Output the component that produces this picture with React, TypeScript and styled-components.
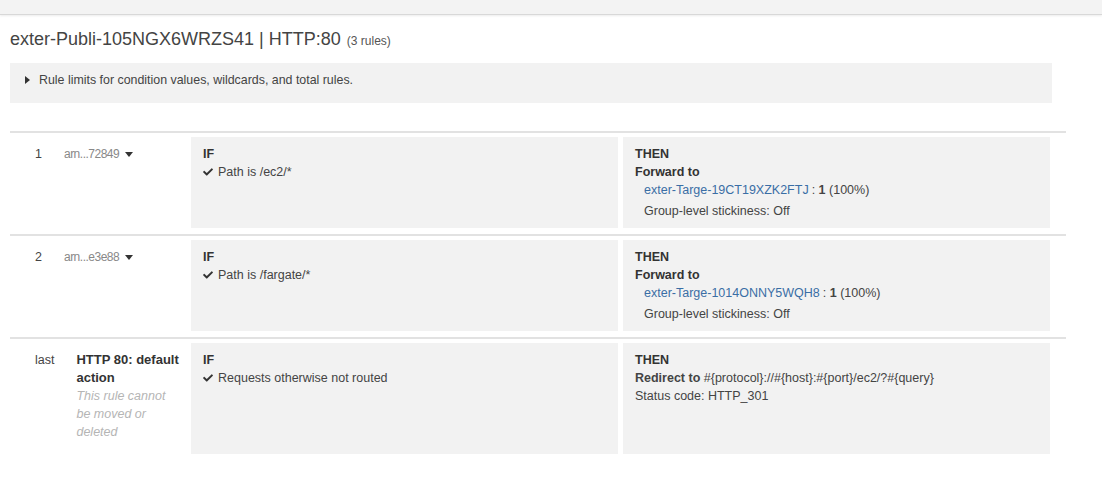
import React from 'react';
import styled, { createGlobalStyle } from 'styled-components';
import { FaCheck } from 'react-icons/fa';

const GlobalStyle = createGlobalStyle`
  html, body {
    margin: 0;
    padding: 0;
    background: #fff;
  }
  body {
    font-family: "Liberation Sans", Arial, sans-serif;
    color: #444;
  }
`;

// 상단 바
const TopBar = styled.div`
  height: 14px;
  background: #f3f3f3;
  border-bottom: 1px solid #d8d8d8;
  box-shadow: 0 1px 2px rgba(0, 0, 0, 0.08);
`;

const Page = styled.div`
  padding: 0 36px 0 10px;
`;

const Title = styled.h1`
  margin: 13px 0 0;
  font-size: 18px;
  line-height: 22px;
  font-weight: normal;
  color: #444;

  small {
    font-size: 12px;
    color: #555;
    margin-left: 6px;
  }
`;

const InfoBox = styled.div`
  margin: 11px 14px 0 0;
  height: 40px;
  box-sizing: border-box;
  padding: 9px 0 0 15px;
  background: #f2f2f2;
  font-size: 12.4px;
  line-height: 16px;
  color: #444;
  display: flex;
  align-items: flex-start;
  gap: 9px;
`;

const CaretRight = styled.span`
  width: 0;
  height: 0;
  margin-top: 4px;
  border-top: 4px solid transparent;
  border-bottom: 4px solid transparent;
  border-left: 5px solid #333;
`;

const RuleList = styled.div`
  margin-top: 28px;
`;

// 규칙 한 줄
const Row = styled.div`
  display: flex;
  border-top: 2px solid #e2e2e2;
  padding: 4px 16px 6px 0;
`;

const Lead = styled.div<{ $bottom?: number }>`
  width: 181px;
  flex: none;
  box-sizing: border-box;
  padding: 8px 10px ${(p) => p.$bottom ?? 0}px 25px;
  display: flex;
  gap: 22px;
  font-size: 12.5px;
  line-height: 18px;
`;

const Num = styled.span`
  color: #444;
`;

const RuleName = styled.div`
  color: #888;
  font-size: 12px;
  letter-spacing: -0.5px;
  display: flex;
  align-items: flex-start;
  gap: 6px;
  white-space: nowrap;
`;

const CaretDown = styled.span`
  width: 0;
  height: 0;
  margin-top: 7px;
  border-left: 4px solid transparent;
  border-right: 4px solid transparent;
  border-top: 5px solid #333;
`;

const DefaultName = styled.div`
  flex: 1;
  min-width: 0;

  strong {
    display: block;
    font-size: 13px;
    color: #333;
  }

  em {
    display: block;
    color: #b5b5b5;
  }
`;

const Panels = styled.div`
  flex: 1;
  display: flex;
  gap: 5px;
`;

const Panel = styled.div`
  flex: 1;
  min-height: 91px;
  box-sizing: border-box;
  padding: 8px 12px;
  background: #f2f2f2;
  font-size: 12.5px;
  line-height: 18px;
  color: #444;
`;

const Label = styled.div`
  font-weight: bold;
  color: #333;
`;

const Condition = styled.div`
  display: flex;
  align-items: center;
  gap: 5px;

  svg {
    color: #333;
    font-size: 10px;
  }
`;

const Indent = styled.div<{ $gap?: number }>`
  padding-left: 9px;
  margin-top: ${(p) => p.$gap ?? 0}px;
`;

const TargetLink = styled.a`
  color: #3a6ea5;
  text-decoration: none;
  margin-right: 3px;
`;

type Rule = {
  num: string;
  arn: string;
  path: string;
  target: string;
};

const rules: Rule[] = [
  { num: '1', arn: 'arn...72849', path: 'Path is /ec2/*', target: 'exter-Targe-19CT19XZK2FTJ' },
  { num: '2', arn: 'arn...e3e88', path: 'Path is /fargate/*', target: 'exter-Targe-1014ONNY5WQH8' },
];

const ForwardRow = ({ rule }: { rule: Rule }) => (
  <Row>
    <Lead>
      <Num>{rule.num}</Num>
      <RuleName>
        {rule.arn}
        <CaretDown />
      </RuleName>
    </Lead>
    <Panels>
      <Panel>
        <Label>IF</Label>
        <Condition>
          <FaCheck />
          {rule.path}
        </Condition>
      </Panel>
      <Panel>
        <Label>THEN</Label>
        <Label>Forward to</Label>
        <Indent>
          <TargetLink href="#">{rule.target}</TargetLink>: <b>1</b> (100%)
        </Indent>
        <Indent $gap={3}>Group-level stickiness: Off</Indent>
      </Panel>
    </Panels>
  </Row>
);

const App = () => (
  <>
    <GlobalStyle />
    <TopBar />
    <Page>
      <Title>
        exter-Publi-105NGX6WRZS41 | HTTP:80<small>(3 rules)</small>
      </Title>
      <InfoBox>
        <CaretRight />
        Rule limits for condition values, wildcards, and total rules.
      </InfoBox>
      <RuleList>
        {rules.map((r) => (
          <ForwardRow key={r.num} rule={r} />
        ))}
        <Row>
          <Lead $bottom={13}>
            <Num>last</Num>
            <DefaultName>
              <strong>HTTP 80: default action</strong>
              <em>This rule cannot be moved or deleted</em>
            </DefaultName>
          </Lead>
          <Panels>
            <Panel>
              <Label>IF</Label>
              <Condition>
                <FaCheck />
                Requests otherwise not routed
              </Condition>
            </Panel>
            <Panel>
              <Label>THEN</Label>
              <div>
                <b>Redirect to</b> #&#123;protocol&#125;://#&#123;host&#125;:#&#123;port&#125;/ec2/?#&#123;query&#125;
              </div>
              <div>Status code: HTTP_301</div>
            </Panel>
          </Panels>
        </Row>
      </RuleList>
    </Page>
  </>
);

export default App;
